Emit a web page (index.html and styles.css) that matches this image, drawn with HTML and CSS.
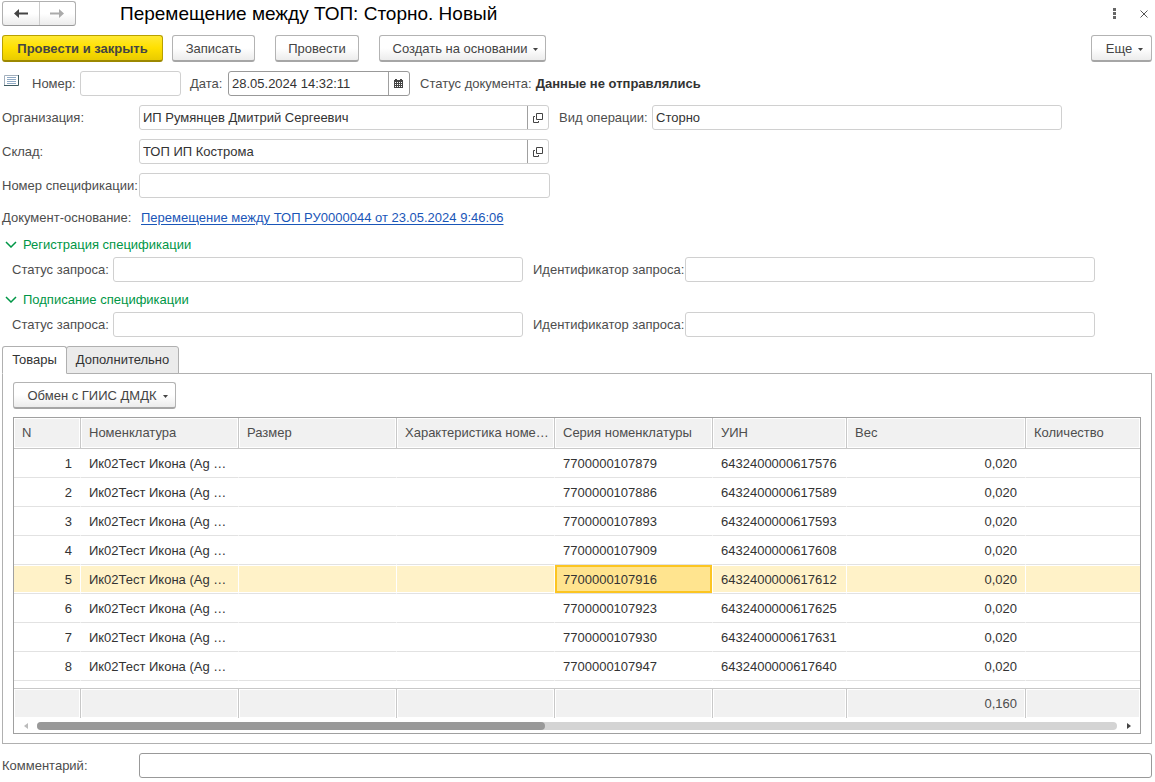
FILE: index.html
```
<!DOCTYPE html>
<html lang="ru">
<head>
<meta charset="utf-8">
<title>Перемещение между ТОП: Сторно. Новый</title>
<link rel="stylesheet" href="styles.css">
</head>
<body>
<svg class="defs" aria-hidden="true">
  <symbol id="open" viewBox="0 0 10 10"><path d="M3.5.5h6v6h-6zM2 3.500H.5v6h5V8" fill="none" stroke="#444"/></symbol>
  <symbol id="caret" viewBox="0 0 5 3"><path d="M0 0h5L2.500 3z" fill="#444"/></symbol>
  <symbol id="chevron" viewBox="0 0 12 7"><path d="M1 1l5 5 5-5" fill="none" stroke="#009646" stroke-width="1.500"/></symbol>
</svg>
<header class="titlebar">
  <div class="nav">
    <button class="nav-btn" type="button" aria-label="Назад"><svg width="14" height="9" viewBox="0 0 14 9"><path d="M0 4.500L5 0v3.500h9v2H5V9z" fill="#444"/></svg></button>
    <button class="nav-btn" type="button" aria-label="Вперед"><svg width="14" height="9" viewBox="0 0 14 9"><path d="M14 4.500L9 0v3.500H0v2h9V9z" fill="#aaa"/></svg></button>
  </div>
  <h1 class="title">Перемещение между ТОП: Сторно. Новый</h1>
  <button class="plain" type="button" aria-label="Меню"><svg width="3" height="11" viewBox="0 0 3 11"><path d="M0 0h3v3H0zM0 4h3v3H0zM0 8h3v3H0z" fill="#666"/></svg></button>
  <button class="plain close" type="button" aria-label="Закрыть"><svg width="8" height="8" viewBox="0 0 8 8"><path d="M.5.5l7 7m0-7l-7 7" stroke="#555" fill="none"/></svg></button>
</header>

<div class="toolbar">
  <button class="btn primary" type="button">Провести и закрыть</button>
  <button class="btn save" type="button">Записать</button>
  <button class="btn post" type="button">Провести</button>
  <button class="btn create" type="button">Создать на основании <svg class="caret"><use href="#caret"/></svg></button>
  <button class="btn more" type="button">Еще <svg class="caret"><use href="#caret"/></svg></button>
</div>

<main>
  <div class="row">
    <svg class="list-icon" width="15" height="11" viewBox="0 0 15 11"><path d="M.5 11V.5H15" fill="none" stroke="#a3b0bd"/><path d="M0 10.500h14.500V0" fill="none" stroke="#3d5a60"/><path d="M3 2.500h9m-9 2h9m-9 2h9m-9 2h9" stroke="#8fa9c4"/></svg>
    <label class="num-label" for="num">Номер:</label>
    <input class="field num" id="num" type="text">
    <label class="date-label" for="date">Дата:</label>
    <div class="combo date">
      <input class="inner" id="date" type="text" value="28.05.2024 14:32:11">
      <button class="pick" type="button" aria-label="Календарь"><svg width="10" height="9" viewBox="0 0 10 9"><path d="M0 1h1V0h2v1h3V0h2v1h1v8H0z" fill="#444"/><path d="M1 3.500h7M1 5.500h7M1 7.500h7" stroke="#fff" stroke-dasharray="1 1"/></svg></button>
    </div>
    <span class="status">Статус документа:</span><b class="status-value">Данные не отправлялись</b>
  </div>
  <div class="row">
    <label class="main-label" for="org">Организация:</label>
    <div class="combo"><input class="inner" id="org" type="text" value="ИП Румянцев Дмитрий Сергеевич"><button class="pick" type="button" aria-label="Открыть организацию"><svg width="10" height="10"><use href="#open"/></svg></button></div>
    <label class="op-label" for="op">Вид операции:</label>
    <input class="field" id="op" type="text" value="Сторно">
  </div>
  <div class="row">
    <label class="main-label" for="store">Склад:</label>
    <div class="combo"><input class="inner" id="store" type="text" value="ТОП ИП Кострома"><button class="pick" type="button" aria-label="Открыть склад"><svg width="10" height="10"><use href="#open"/></svg></button></div>
  </div>
  <div class="row">
    <label class="main-label" for="spec">Номер спецификации:</label>
    <input class="field" id="spec" type="text">
  </div>
  <div class="row base">
    <span class="main-label">Документ-основание:</span>
    <a class="link" href="#">Перемещение между ТОП РУ0000044 от 23.05.2024 9:46:06</a>
  </div>

  <section>
    <button class="group" type="button" aria-expanded="true"><svg width="12" height="7"><use href="#chevron"/></svg>Регистрация спецификации</button>
    <div class="row sub">
      <label class="sub-label" for="s1">Статус запроса:</label><input class="field" id="s1" type="text">
      <label class="id-label" for="i1">Идентификатор запроса:</label><input class="field" id="i1" type="text">
    </div>
  </section>
  <section>
    <button class="group" type="button" aria-expanded="true"><svg width="12" height="7"><use href="#chevron"/></svg>Подписание спецификации</button>
    <div class="row sub">
      <label class="sub-label" for="s2">Статус запроса:</label><input class="field" id="s2" type="text">
      <label class="id-label" for="i2">Идентификатор запроса:</label><input class="field" id="i2" type="text">
    </div>
  </section>

  <div class="tabs" role="tablist">
    <button class="tab active" type="button" role="tab" aria-selected="true">Товары</button>
    <button class="tab" type="button" role="tab" aria-selected="false">Дополнительно</button>
  </div>
  <div class="panel" role="tabpanel">
    <button class="btn exchange" type="button">Обмен с ГИИС ДМДК <svg class="caret"><use href="#caret"/></svg></button>
    <div class="grid">
      <table class="goods">
        <colgroup><col class="c-n"><col class="c-text"><col class="c-text"><col class="c-text"><col class="c-text"><col class="c-uin"><col class="c-weight"><col></colgroup>
        <thead><tr><th>N</th><th>Номенклатура</th><th>Размер</th><th>Характеристика номе…</th><th>Серия номенклатуры</th><th>УИН</th><th>Вес</th><th>Количество</th></tr></thead>
        <tbody>
          <tr><td class="r">1</td><td>Ик02Тест Икона (Ag …</td><td></td><td></td><td>7700000107879</td><td>6432400000617576</td><td class="r">0,020</td><td></td></tr>
          <tr><td class="r">2</td><td>Ик02Тест Икона (Ag …</td><td></td><td></td><td>7700000107886</td><td>6432400000617589</td><td class="r">0,020</td><td></td></tr>
          <tr><td class="r">3</td><td>Ик02Тест Икона (Ag …</td><td></td><td></td><td>7700000107893</td><td>6432400000617593</td><td class="r">0,020</td><td></td></tr>
          <tr><td class="r">4</td><td>Ик02Тест Икона (Ag …</td><td></td><td></td><td>7700000107909</td><td>6432400000617608</td><td class="r">0,020</td><td></td></tr>
          <tr class="selected"><td class="r">5</td><td>Ик02Тест Икона (Ag …</td><td></td><td></td><td class="current">7700000107916</td><td>6432400000617612</td><td class="r">0,020</td><td></td></tr>
          <tr><td class="r">6</td><td>Ик02Тест Икона (Ag …</td><td></td><td></td><td>7700000107923</td><td>6432400000617625</td><td class="r">0,020</td><td></td></tr>
          <tr><td class="r">7</td><td>Ик02Тест Икона (Ag …</td><td></td><td></td><td>7700000107930</td><td>6432400000617631</td><td class="r">0,020</td><td></td></tr>
          <tr><td class="r">8</td><td>Ик02Тест Икона (Ag …</td><td></td><td></td><td>7700000107947</td><td>6432400000617640</td><td class="r">0,020</td><td></td></tr>
          <tr class="spacer"><td colspan="8"></td></tr>
        </tbody>
        <tfoot><tr><td></td><td></td><td></td><td></td><td></td><td></td><td class="r">0,160</td><td></td></tr></tfoot>
      </table>
      <div class="scroll">
        <button class="arrow" type="button" aria-label="Влево"><svg width="4" height="6" viewBox="0 0 4 6"><path d="M4 0v6L0 3z" fill="#bbb"/></svg></button>
        <div class="track"><div class="thumb"></div></div>
        <button class="arrow" type="button" aria-label="Вправо"><svg width="4" height="6" viewBox="0 0 4 6"><path d="M0 0v6l4-3z" fill="#444"/></svg></button>
      </div>
    </div>
  </div>

  <div class="row comment">
    <label class="main-label" for="comment">Комментарий:</label>
    <input class="field dark" id="comment" type="text">
  </div>
</main>
</body>
</html>
```
FILE: styles.css
```
* { box-sizing: border-box; }
body {
  margin: 0;
  padding: 1px 3px 4px 2px;
  background: #fff;
  color: #4d4d4d;
  font: 13px/15px "Liberation Sans", Arial, sans-serif;
}
button, input { font: inherit; color: inherit; }
button { padding: 0; border: 0; background: none; }
svg { flex: none; display: block; }
.defs { position: absolute; width: 0; height: 0; }

.titlebar { display: flex; align-items: center; height: 25px; }
.nav {
  display: flex;
  width: 74px;
  height: 25px;
  border: 1px solid #b0b0b0;
  border-bottom-color: #999;
  border-radius: 3px;
  background: linear-gradient(#fff 50%, #ececec);
}
.nav-btn { flex: 1; display: flex; align-items: center; justify-content: center; }
.nav-btn + .nav-btn { border-left: 1px solid #ccc; }
.title { flex: 1; margin: 0 0 0 44px; font-size: 19px; line-height: 24px; font-weight: 400; color: #000; }
.plain { display: flex; justify-content: center; width: 20px; }
.close { margin: 0 -2px 0 10px; }

.toolbar { display: flex; margin-top: 9px; }
.btn {
  display: flex;
  align-items: center;
  justify-content: center;
  height: 27px;
  border: 1px solid #b3b3b3;
  border-bottom: 2px solid #a6a6a6;
  border-radius: 3px;
  background: linear-gradient(#fff 50%, #ececec);
  white-space: nowrap;
  color: #444;
}
.caret { width: 5px; height: 3px; margin: 2px 0 0 6px; }
.primary {
  width: 161px;
  border-color: #b8a000;
  border-bottom-color: #9c8800;
  background: linear-gradient(#ffe934, #ffe000 50%, #e9cb00);
  font-weight: 700;
}
.save { width: 83px; margin-left: 9px; }
.post { width: 84px; margin-left: 20px; }
.create { width: 167px; margin-left: 20px; padding-left: 6px; }
.more { width: 61px; margin-left: auto; padding-left: 6px; }

.row { display: flex; align-items: center; margin-top: 9px; }
.row label, .row span { flex: none; white-space: nowrap; }
.field, .combo {
  flex: 0 1 410px;
  min-width: 0;
  height: 25px;
  border: 1px solid #d0d0d0;
  border-radius: 3px;
  background: #fff;
  color: #333;
}
.field { padding: 0 3px; }
#spec { flex-basis: 411px; }
.combo { display: flex; overflow: hidden; }
.inner { flex: 1; min-width: 0; border: 0; padding: 0 3px; background: none; }
.pick { display: flex; align-items: center; justify-content: center; width: 21px; border-left: 1px solid #a0a0a0; }
.dark, .date { border-color: #999; }
.list-icon { align-self: flex-start; margin: 4px 0 0 2px; }
.num-label { width: 48px; margin-left: 13px; }
.num { flex-basis: 101px; }
.date-label { width: 38px; margin-left: 9px; }
.date { flex-basis: 182px; }
.status { margin: 0 4px 0 10px; }
.status-value { color: #333; }
.main-label { width: 137px; }
.op-label { width: 93px; margin-left: 10px; }
.base { margin-top: 12px; }
.link { margin-left: 2px; color: #1a56b8; text-underline-offset: 2px; }

.group { display: flex; align-items: center; gap: 6px; height: 15px; margin: 12px 0 0 3px; color: #009646; }
.sub { margin: 5px 0 0 10px; }
section + section .group { margin-top: 10px; }
.sub-label { width: 101px; }
.id-label { width: 152px; margin-left: 10px; }

.tabs { display: flex; margin-top: 9px; }
.tab {
  height: 28px;
  width: 113px;
  margin: 0 0 -1px -1px;
  padding-bottom: 2px;
  border: 1px solid #b0b0b0;
  border-radius: 3px 3px 0 0;
  background: #ebebeb;
  color: #333;
}
.tab.active { width: 65px; margin-left: 0; border-bottom-color: #fff; background: #fff; z-index: 1; }
.panel { padding: 8px 10px 9px; border: 1px solid #b0b0b0; }
.exchange { width: 163px; padding-left: 6px; }

.grid { margin-top: 8px; border: 1px solid #a0a0a0; }
.goods { width: 100%; table-layout: fixed; border-collapse: separate; border-spacing: 0; }
.c-n { width: 67px; }
.c-text { width: 158px; }
.c-uin { width: 134px; }
.c-weight { width: 179px; }
.goods th, .goods td {
  height: 29px;
  padding: 0 8px;
  border-right: 1px solid #fff;
  border-bottom: 1px solid #e2e2e2;
  overflow: hidden;
  text-overflow: ellipsis;
  white-space: nowrap;
  text-align: left;
  color: #333;
}
.goods th, .goods tfoot td {
  height: 31px;
  border-right-color: #c8c8c8;
  border-bottom-color: #c8c8c8;
  background: #f1f1f1;
  box-shadow: inset 0 0 0 1px #fff;
  font-weight: 400;
  color: #4d4d4d;
}
.goods th { padding: 0 2px 2px 8px; }
.goods tfoot td { height: 30px; border-top: 1px solid #c8c8c8; border-bottom: 0; }
.goods tr > :last-child { border-right: 0; }
.goods .r { text-align: right; }
.goods .spacer td { height: 7px; border: 0; }
.selected td { background: #fff2c8; box-shadow: inset 0 1px #fff, inset 0 -1px #fff; }
.selected .current { background: #ffe48f; box-shadow: inset 0 0 0 2px #fcc521; }

.scroll { display: flex; align-items: center; height: 15px; }
.arrow { display: flex; align-items: center; justify-content: center; width: 23px; }
.track { flex: 1; height: 8px; border-radius: 4px; background: #d4d4d4; }
.thumb { width: 47%; height: 8px; border-radius: 4px; background: #999; }
.comment .field { flex: 1; }
```
